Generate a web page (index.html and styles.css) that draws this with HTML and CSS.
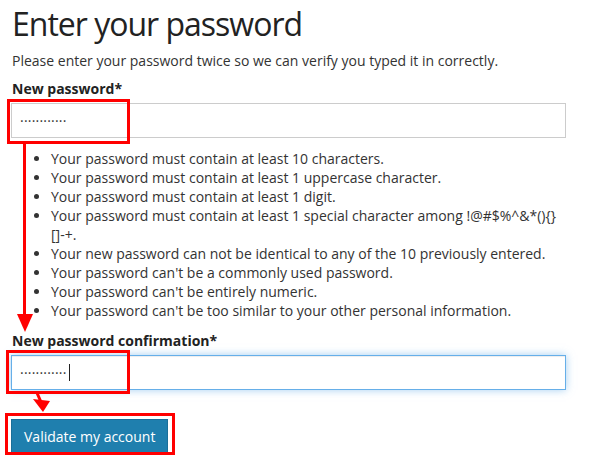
FILE: index.html
```html
<!DOCTYPE html>
<html>
<head>
<meta charset="utf-8">
<link rel="stylesheet" href="styles.css">
</head>
<body>
<main class="page">
  <h1 class="title">Enter your password</h1>
  <p class="intro">Please enter your password twice so we can verify you typed it in correctly.</p>
  <form class="form">
    <label class="label">New password*</label>
    <div class="field">············</div>
    <ul class="rules">
      <li>Your password must contain at least 10 characters.</li>
      <li>Your password must contain at least 1 uppercase character.</li>
      <li>Your password must contain at least 1 digit.</li>
      <li>Your password must contain at least 1 special character among !@#$%^&amp;*(){}[]-+.</li>
      <li>Your new password can not be identical to any of the 10 previously entered.</li>
      <li>Your password can't be a commonly used password.</li>
      <li>Your password can't be entirely numeric.</li>
      <li>Your password can't be too similar to your other personal information.</li>
    </ul>
    <label class="label">New password confirmation*</label>
    <div class="field field-focus">············<span class="caret"></span></div>
    <div class="actions">
      <button type="button" class="btn">Validate my account</button>
    </div>
  </form>
  <svg class="annotations" width="590" height="466" viewBox="0 0 590 466">
    <g fill="none" stroke="#ff0000" stroke-width="3">
      <rect x="8.5" y="100.5" width="120" height="42"/>
      <rect x="7.5" y="351.5" width="121" height="41"/>
      <rect x="6.5" y="414.5" width="167" height="39"/>
      <line x1="24.5" y1="143" x2="24.5" y2="316"/>
      <line x1="37" y1="393" x2="41" y2="402"/>
    </g>
    <g fill="#ff0000">
      <polygon points="17,314 33,314 25,332"/>
      <polygon points="33,399 50,401 43,412"/>
    </g>
  </svg>
</main>
</body>
</html>
```
FILE: styles.css
```css
html, body {
  margin: 0;
  padding: 0;
  background: #ffffff;
}

body {
  font-family: "Open Sans", "Noto Sans", sans-serif;
  font-size: 14px;
  line-height: 19px;
  color: #333333;
}

.page {
  position: relative;
  width: 555px;
  height: 466px;
  padding: 0 24px 0 11px;
  box-sizing: content-box;
}

.title {
  margin: 0;
  padding: 2px 0 0 1px;
  font-size: 32px;
  line-height: 44px;
  font-weight: 400;
  letter-spacing: -1px;
  color: #222222;
}

.intro {
  margin: 5px 0 0 1px;
}

.form {
  display: flex;
  flex-direction: column;
  margin-top: 9px;
}

.label {
  display: block;
  font-weight: 700;
  padding-left: 1px;
  color: #222222;
}

.field {
  margin-top: 5px;
  height: 35px;
  box-sizing: border-box;
  border: 1px solid #cccccc;
  padding: 0 0 0 8px;
  display: flex;
  align-items: center;
  font-size: 14px;
  letter-spacing: 0.2px;
  color: #333333;
}

.field-focus {
  border-color: #66afe9;
  box-shadow: inset 0 1px 1px rgba(0, 0, 0, 0.075), 0 0 8px rgba(102, 175, 233, 0.6);
}

.caret {
  display: inline-block;
  width: 1px;
  height: 17px;
  background: #222222;
  margin-left: 2px;
}

.rules {
  margin: 11px 0 11px 0;
  padding: 0 0 0 40px;
}

.actions {
  margin-top: 29px;
}

.btn {
  font-family: "Open Sans", "Noto Sans", sans-serif;
  font-size: 14px;
  line-height: 19px;
  color: #ffffff;
  background: #1f7fae;
  border: 1px solid #1a6f99;
  padding: 7px 12px;
  border-radius: 0;
  margin: 0;
}

.annotations {
  position: absolute;
  left: 0;
  top: 0;
  pointer-events: none;
}
```
